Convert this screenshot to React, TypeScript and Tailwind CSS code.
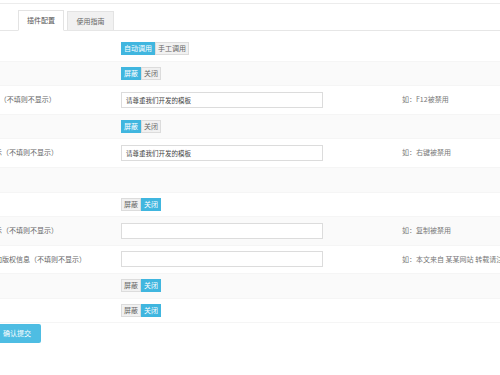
import React from "react";

const font = { fontFamily: '"Noto Sans CJK SC", "Noto Sans", sans-serif' };

function Toggle({ options, active }: { options: string[]; active: number }) {
  return (
    <div className="flex">
      {options.map((o, i) => (
        <div
          key={o}
          className={
            i === active
              ? "h-[13px] px-[2px] flex items-center bg-[#40b6df] text-white text-[7px] leading-none border border-[#40b6df]"
              : "h-[13px] px-[2px] flex items-center bg-[#f1f1f1] text-[#666] text-[7px] leading-none border border-[#dcdcdc]"
          }
        >
          {o}
        </div>
      ))}
    </div>
  );
}

function Input({ value }: { value?: string }) {
  return (
    <div className="w-[202px] h-[16px] border border-[#dcdcdc] bg-white flex items-center px-[4px] text-[6.5px] text-[#444] leading-none">
      {value}
    </div>
  );
}

type Row = {
  label?: string;
  kind: "toggle" | "input" | "empty";
  opts?: string[];
  active?: number;
  value?: string;
  hint?: string;
};

const rows: Row[] = [
  { label: "调用", kind: "toggle", opts: ["自动调用", "手工调用"], active: 0 },
  { label: "F12", kind: "toggle", opts: ["屏蔽", "关闭"], active: 0 },
  { label: "F12提示（不填则不显示）", kind: "input", value: "请尊重我们开发的模板", hint: "如：F12被禁用" },
  { label: "右键", kind: "toggle", opts: ["屏蔽", "关闭"], active: 0 },
  { label: "右键提示（不填则不显示）", kind: "input", value: "请尊重我们开发的模板", hint: "如：右键被禁用" },
  { kind: "empty" },
  { label: "复制", kind: "toggle", opts: ["屏蔽", "关闭"], active: 1 },
  { label: "复制提示（不填则不显示）", kind: "input", value: "", hint: "如：复制被禁用" },
  { label: "复制添加版权信息（不填则不显示）", kind: "input", value: "", hint: "如：本文来自 某某网站  转载请注明出处" },
  { label: "选择", kind: "toggle", opts: ["屏蔽", "关闭"], active: 1 },
  { label: "拖拽", kind: "toggle", opts: ["屏蔽", "关闭"], active: 1 },
];

export default function App() {
  return (
    <div className="w-[500px] h-[375px] bg-white overflow-hidden relative" style={font}>
      <div className="mt-[3px] border-t border-[#ececec]" />
      <div className="flex items-end gap-[3px] pl-[18px] pt-[5px] border-b border-[#e6e6e6] h-[27px]">
        <div className="w-[46px] h-[21px] -mb-px bg-white border border-[#e3e3e3] border-b-white flex items-center justify-center text-[7px] text-[#555] leading-none">
          插件配置
        </div>
        <div className="w-[47px] h-[19px] bg-[#f1f1f1] border border-[#e3e3e3] border-b-0 flex items-center justify-center text-[7px] text-[#666] leading-none">
          使用指南
        </div>
      </div>
      <div className="pt-[6px] -ml-[26px] w-[526px]">
        {rows.map((r, i) => (
          <div
            key={i}
            className={
              (i % 2 === 1 ? "bg-[#fafafa] " : "bg-white ") +
              (r.kind === "input" ? "h-[28.5px] " : r.kind === "empty" ? "h-[25px] " : "h-[24.5px] ") +
              "flex items-center border-b border-[#f5f5f5]"
            }
          >
            <div className="w-[147px] shrink-0 text-[7px] text-[#666] whitespace-nowrap leading-none">
              {r.label}
            </div>
            <div className="w-[281px] shrink-0 flex items-center">
              {r.kind === "toggle" && <Toggle options={r.opts!} active={r.active!} />}
              {r.kind === "input" && <Input value={r.value} />}
            </div>
            <div className="text-[7px] text-[#777] whitespace-nowrap leading-none">{r.hint}</div>
          </div>
        ))}
      </div>
      <div className="mt-[1px] -ml-[9px] w-[50px] h-[19px] bg-[#4ebde3] rounded-[2px] flex items-center pl-[12px] text-[7px] text-white leading-none">
        确认提交
      </div>
    </div>
  );
}
